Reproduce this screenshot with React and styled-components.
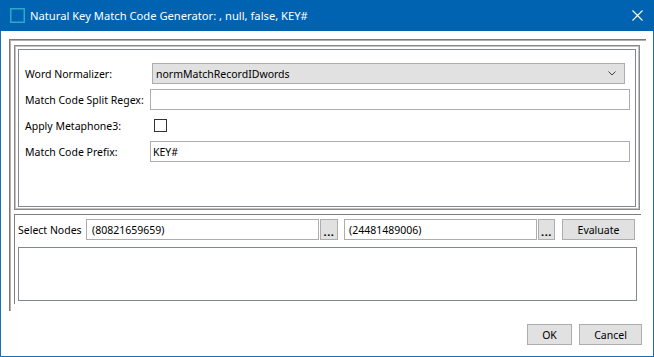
import React from "react";
import styled, { createGlobalStyle } from "styled-components";

const Global = createGlobalStyle`
  html, body { margin: 0; padding: 0; background: #ffffff; }
  body { font-family: "Noto Sans", "Liberation Sans", sans-serif; color: #000; }
  #root { width: 654px; height: 357px; }
  * { box-sizing: border-box; }
`;

const Window = styled.div`
  width: 654px;
  height: 357px;
  border: 1px solid #1b6db5;
  border-top: none;
  display: flex;
  flex-direction: column;
  background: #fff;
`;

const TitleBar = styled.div`
  height: 31px;
  margin: 0 -1px;
  background: #0063b1;
  display: flex;
  align-items: center;
  padding: 0 11px 0 10px;
  color: #fff;
  font-size: 11.2px;
`;

const TitleText = styled.span`
  flex: 1;
  margin-left: 5px;
  white-space: nowrap;
`;

const Body = styled.div`
  flex: 1;
  display: flex;
  flex-direction: column;
  padding: 8px 7px 0 8px;
`;

const OuterPanel = styled.div`
  height: 272px;
  border-style: solid;
  border-color: #7a7a7a;
  border-width: 1px 0 0 1px;
  box-shadow: inset 1px 1px 0 #b0b0b0;
  padding: 5px 6px 7px 4px;
  display: flex;
  flex-direction: column;
  gap: 4px;
`;

const TopComp = styled.div`
  height: 165px;
  border: 1px solid #8a8a8a;
  box-shadow: inset 1px 1px 0 #c4c4c4, inset -1px -1px 0 #c4c4c4;
  padding: 3px 3px 2px 3px;
  display: flex;
`;

const InnerBox = styled.div`
  flex: 1;
  border: 1px solid #828790;
  padding: 13px 5px 0 6px;
  display: grid;
  grid-template-columns: 125px 1fr;
  grid-auto-rows: 21px;
  row-gap: 5px;
  align-content: start;
  align-items: center;
  font-size: 10.5px;
`;

const Label = styled.div`
  white-space: nowrap;
`;

const Field = styled.div`
  height: 21px;
  border: 1px solid #abadb3;
  background: #fff;
  display: flex;
  align-items: center;
  padding-left: ${(p) => p.$pad || 2}px;
  font-size: 10.5px;
  white-space: nowrap;
  width: ${(p) => (p.$w ? `${p.$w}px` : "auto")};
  flex: ${(p) => (p.$w ? "none" : "1")};
`;

const Combo = styled.div`
  height: 21px;
  margin: 0 5px 0 2px;
  border: 1px solid #adadad;
  background: #e1e1e1;
  display: flex;
  align-items: center;
  padding: 0 8px 0 3px;
  font-size: 10.5px;
`;

const ComboText = styled.span`
  flex: 1;
`;

const CheckBox = styled.div`
  width: 13px;
  height: 13px;
  margin-left: 4px;
  border: 1px solid #333333;
  background: #fff;
`;

const BottomComp = styled.div`
  height: 90px;
  border-style: solid;
  border-color: #7e7e7e;
  border-width: 1px 0 0 1px;
  margin-right: -1px;
  padding: 4px 4px 3px 3px;
  display: flex;
  flex-direction: column;
  gap: 7px;
`;

const NodeRow = styled.div`
  height: 21px;
  display: flex;
  align-items: center;
  font-size: 10.5px;
`;

const NodeLabel = styled.div`
  width: 68px;
  white-space: nowrap;
`;

const Button = styled.div`
  height: 21px;
  width: ${(p) => p.$w}px;
  margin-left: ${(p) => p.$ml || 0}px;
  border: 1px solid #adadad;
  background: #e1e1e1;
  display: flex;
  align-items: center;
  justify-content: center;
  font-size: 10.5px;
  flex: none;
`;

const Dots = styled.span`
  font-weight: 700;
  letter-spacing: 0.5px;
  margin-top: 4px;
  font-size: 11px;
`;

const TextArea = styled.div`
  height: 54px;
  border: 1px solid #828790;
  background: #fff;
`;

const Footer = styled.div`
  display: flex;
  justify-content: flex-end;
  gap: 7px;
  margin-top: 13px;
  padding-right: 4px;
`;

const TitleIcon = () => (
  <svg width="15" height="15" viewBox="0 0 15 15">
    <rect x="0.75" y="0.75" width="13.5" height="13.5" fill="none" stroke="#2aa9c8" strokeWidth="1.5" />
  </svg>
);

const CloseIcon = () => (
  <svg width="11" height="11" viewBox="0 0 11 11">
    <path d="M0.5 0.5 L10.5 10.5 M10.5 0.5 L0.5 10.5" stroke="#ffffff" strokeWidth="1.1" />
  </svg>
);

const Chevron = () => (
  <svg width="8" height="5" viewBox="0 0 8 5">
    <path d="M0.5 0.5 L4 4 L7.5 0.5" fill="none" stroke="#404040" strokeWidth="1" />
  </svg>
);

export default function App() {
  return (
    <>
      <Global />
      <Window>
        <TitleBar>
          <TitleIcon />
          <TitleText>Natural Key Match Code Generator: , null, false, KEY#</TitleText>
          <CloseIcon />
        </TitleBar>
        <Body>
          <OuterPanel>
            <TopComp>
              <InnerBox>
                <Label>Word Normalizer:</Label>
                <Combo>
                  <ComboText>normMatchRecordIDwords</ComboText>
                  <Chevron />
                </Combo>
                <Label>Match Code Split Regex:</Label>
                <Field />
                <Label>Apply Metaphone3:</Label>
                <CheckBox />
                <Label>Match Code Prefix:</Label>
                <Field>KEY#</Field>
              </InnerBox>
            </TopComp>
            <BottomComp>
              <NodeRow>
                <NodeLabel>Select Nodes</NodeLabel>
                <Field $w={233} $pad={5}>(80821659659)</Field>
                <Button $w={18} $ml={1}><Dots>...</Dots></Button>
                <Field $w={193} $pad={4} style={{ marginLeft: 6 }}>(24481489006)</Field>
                <Button $w={17} $ml={1}><Dots>...</Dots></Button>
                <Button $w={73} $ml={7}>Evaluate</Button>
              </NodeRow>
              <TextArea />
            </BottomComp>
          </OuterPanel>
          <Footer>
            <Button $w={45}>OK</Button>
            <Button $w={63}>Cancel</Button>
          </Footer>
        </Body>
      </Window>
    </>
  );
}
